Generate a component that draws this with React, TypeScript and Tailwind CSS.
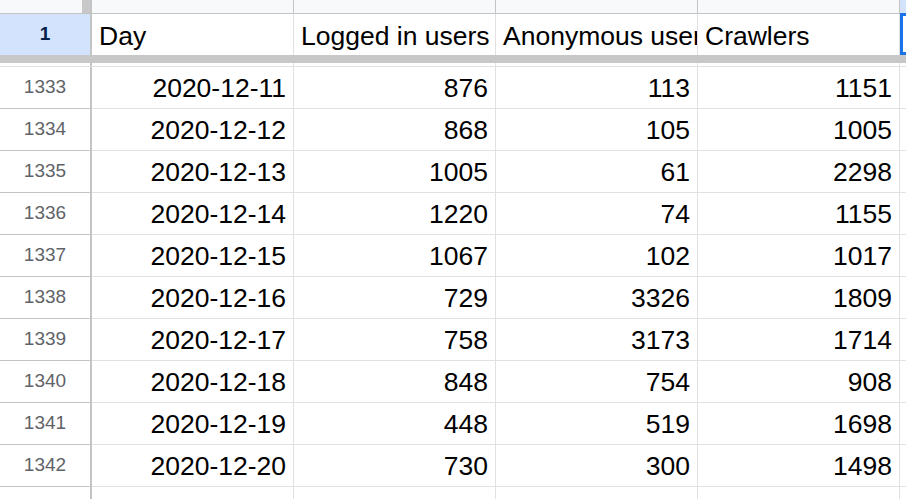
const rows = [
  ["1333", "2020-12-11", "876", "113", "1151"],
  ["1334", "2020-12-12", "868", "105", "1005"],
  ["1335", "2020-12-13", "1005", "61", "2298"],
  ["1336", "2020-12-14", "1220", "74", "1155"],
  ["1337", "2020-12-15", "1067", "102", "1017"],
  ["1338", "2020-12-16", "729", "3326", "1809"],
  ["1339", "2020-12-17", "758", "3173", "1714"],
  ["1340", "2020-12-18", "848", "754", "908"],
  ["1341", "2020-12-19", "448", "519", "1698"],
  ["1342", "2020-12-20", "730", "300", "1498"],
]

const headers = ["Day", "Logged in users", "Anonymous users", "Crawlers"]

function RowHead({ children, className = "" }: { children?: React.ReactNode; className?: string }) {
  return (
    <div className={`w-[92px] shrink-0 border-r-2 border-[#c4c4c4] flex items-center justify-center ${className}`}>
      {children}
    </div>
  )
}

export default function App() {
  return (
    <div
      className="w-[906px] h-[499px] overflow-hidden bg-white text-black"
      style={{ fontFamily: "'Liberation Sans', Arial, sans-serif" }}
    >
      {/* column header strip (mostly scrolled away) */}
      <div className="flex h-[14px] border-b border-[#c4c4c4]">
        <div className="w-[92px] shrink-0 flex border-r-2 border-[#c4c4c4]">
          <div className="w-[82px] bg-[#f8f9fa]" />
          <div className="w-[8px] bg-[#c8c8c8]" />
        </div>
        {headers.map((h) => (
          <div key={h} className="w-[202px] shrink-0 border-r border-[#c4c4c4] bg-[#f8f9fa]" />
        ))}
        <div className="flex-1 bg-[#d3e3fd]" />
      </div>

      {/* frozen row 1 */}
      <div className="flex h-[41px]">
        <RowHead className="bg-[#d3e3fd] text-[19px] font-bold text-[#041e49]">1</RowHead>
        {headers.map((h) => (
          <div
            key={h}
            className="w-[202px] shrink-0 border-r border-[#e1e1e1] flex items-center px-[7px] pt-[5px] text-[26.5px] whitespace-nowrap overflow-hidden"
          >
            {h}
          </div>
        ))}
        <div className="flex-1 -mt-[1px] h-[42px] border-[3px] border-r-0 border-[#1a73e8]" />
      </div>

      {/* frozen divider */}
      <div className="h-[8px] bg-[#c8c8c8]" />
      <div className="flex h-[4px] border-b border-[#e1e1e1]">
        <RowHead />
        {headers.map((h) => (
          <div key={h} className="w-[202px] shrink-0 border-r border-[#e1e1e1]" />
        ))}
      </div>

      {rows.map(([n, ...cells]) => (
        <div key={n} className="flex h-[42px] border-b border-[#e1e1e1]">
          <RowHead className="border-b border-b-[#c4c4c4] -mb-[1px] text-[19px] text-[#5f6368]">{n}</RowHead>
          {cells.map((c, i) => (
            <div
              key={i}
              className="w-[202px] shrink-0 border-r border-[#e1e1e1] flex items-center justify-end px-[7px] pt-[3px] text-[26.5px] whitespace-nowrap"
            >
              {c}
            </div>
          ))}
        </div>
      ))}

      <div className="flex h-[20px]">
        <RowHead />
        {headers.map((h) => (
          <div key={h} className="w-[202px] shrink-0 border-r border-[#e1e1e1]" />
        ))}
      </div>
    </div>
  )
}
